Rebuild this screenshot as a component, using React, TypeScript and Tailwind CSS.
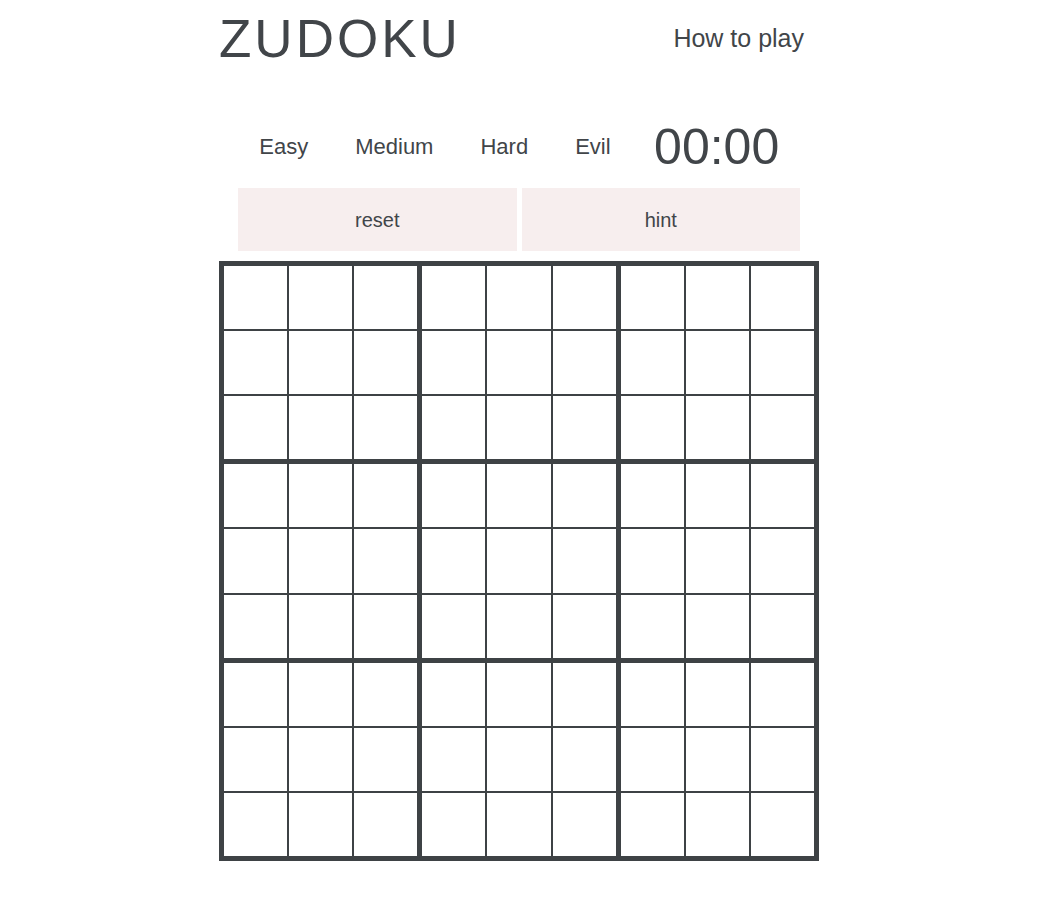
import React from 'react';

const levels = ['Easy', 'Medium', 'Hard', 'Evil'];

function Box() {
  return (
    <div className="grid grid-cols-3 grid-rows-3 gap-[2px] bg-[#3e4245]">
      {Array.from({ length: 9 }).map((_, i) => (
        <div key={i} className="bg-white" />
      ))}
    </div>
  );
}

export default function App() {
  return (
    <div
      className="min-h-screen bg-white text-[#414549]"
      style={{ fontFamily: '"Liberation Sans", Arial, sans-serif' }}
    >
      <div className="w-[600px] ml-[219px]">
        {/* Header */}
        <div className="h-[76px] flex items-center justify-between pr-[15px]">
          <h1 className="text-[53px] leading-none tracking-[3px] font-normal">ZUDOKU</h1>
          <a className="text-[25px] leading-none cursor-pointer">How to play</a>
        </div>

        {/* Levels + timer */}
        <div className="mt-[36px] h-[70px] flex items-center justify-center">
          {levels.map((l) => (
            <button key={l} className="px-[23.5px] text-[22px] leading-none text-[#414549]">
              {l}
            </button>
          ))}
          <span className="ml-[20px] pr-[23px] text-[50px] leading-none">00:00</span>
        </div>

        {/* Controls */}
        <div className="mt-[6px] w-[562px] mx-auto flex gap-[5px]">
          <button className="flex-1 h-[63px] bg-[#f7eeee] text-[20px] text-[#414549]">reset</button>
          <button className="flex-1 h-[63px] bg-[#f7eeee] text-[20px] text-[#414549]">hint</button>
        </div>

        {/* Board */}
        <div className="mt-[10px] w-[600px] h-[600px] bg-[#3e4245] p-[5px] grid grid-cols-3 grid-rows-3 gap-[5px]">
          {Array.from({ length: 9 }).map((_, i) => (
            <Box key={i} />
          ))}
        </div>
      </div>
    </div>
  );
}
